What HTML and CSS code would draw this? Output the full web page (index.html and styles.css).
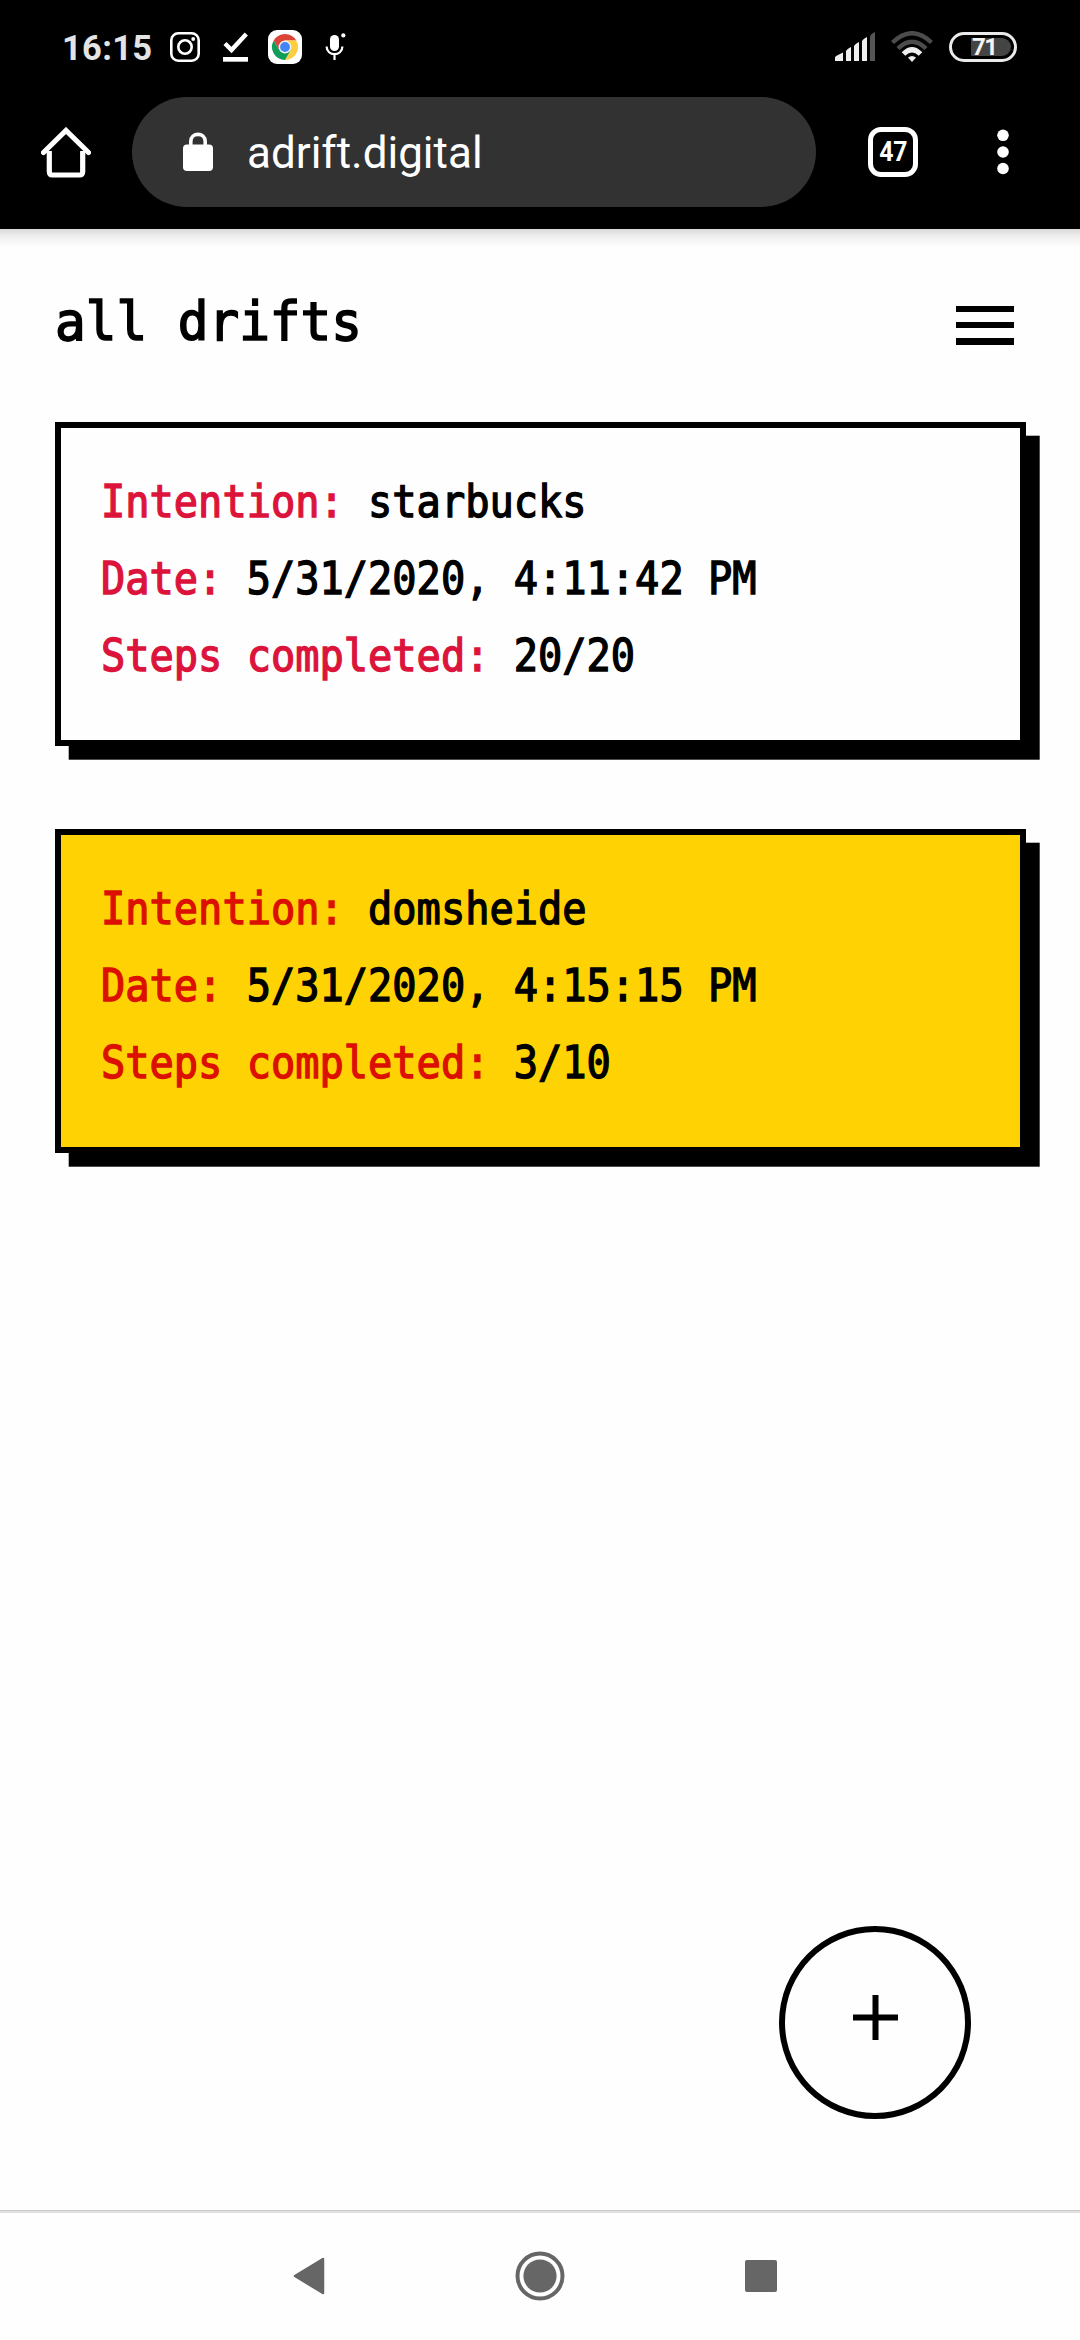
FILE: index.html
```html
<!DOCTYPE html>
<html lang="en">
<head>
<meta charset="utf-8">
<title>all drifts</title>
<link rel="stylesheet" href="styles.css">
</head>
<body>
<div class="screen">
  <div class="status">
    <span class="clock">16:15</span>
    <svg class="instagram" width="30" height="30" viewBox="0 0 30 30" fill="none" stroke="#fff"><rect x="1.3" y="1.3" width="27.4" height="27.4" rx="7" stroke-width="2.6"/><circle cx="15" cy="15" r="6.7" stroke-width="2.6"/><circle cx="23.2" cy="7" r="1.9" fill="#fff" stroke="none"/></svg>
    <svg class="check" width="26" height="30" viewBox="0 0 26 30"><path d="M2 11.5l6.5 6.5L23.3 2" fill="none" stroke="#fff" stroke-width="4.4"/><path d="M0 25h25v4.7H0z" fill="#fff"/></svg>
    <svg class="chrome" width="34" height="34" viewBox="0 0 34 34"><rect width="34" height="34" rx="9" fill="#fff"/><path d="M5.74 10.5A13 13 0 0 1 28.26 10.5H17L11.4 20.2z" fill="#db4437"/><path d="M28.26 10.5A13 13 0 0 1 17 30L22.6 20.2L17 10.5z" fill="#ffcd40"/><path d="M5.74 10.5A13 13 0 0 0 17 30L22.6 20.2H11.4z" fill="#0f9d58"/><circle cx="17" cy="17" r="6.4" fill="#f1f1f1"/><circle cx="17" cy="17" r="4.9" fill="#4285f4"/></svg>
    <svg class="mic" width="22" height="28" viewBox="0 0 22 28"><rect x="5" y="2" width="9" height="16" rx="4.5" fill="#fff"/><path d="M1.6 13.5c0 10.2 15.8 10.2 15.8 0M9.5 21v6" fill="none" stroke="#fff" stroke-width="2.2"/><circle cx="18.3" cy="2.4" r="2.1" fill="#fff"/></svg>
    <svg class="signal" width="40" height="30" viewBox="0 0 40 30" fill="#eee"><path d="M0 29v-3.500Q0 24 3 23L8 20.500V29zM11 29V19.500Q11 17.500 16 15V29zM19 29V14.500Q19 12.500 24 10V29zM27 29V9.500Q27 7.500 32 5V29z"/><path d="M35 29V4.500Q35 2.500 40 0V29z" fill="#555"/></svg>
    <svg class="wifi" width="42" height="32" viewBox="0 0 42 32" fill="none" stroke-width="4.400"><path d="M1.500 11.500Q21-7 40.500 11.500M7 17.500Q21 4 35 17.500" stroke="#4b4b4b"/><path d="M12.500 23Q21 14.500 29.500 23" stroke="#eee" stroke-width="5"/><path d="M17 26.500Q21 23.500 25 26.500L21 31z" fill="#eee"/></svg>
    <div class="battery"><span>71</span></div>
  </div>
  <div class="toolbar">
    <svg class="home" width="50" height="51" viewBox="0 0 50 51" fill="none" stroke="#fff" stroke-width="5.200" stroke-linejoin="round"><path d="M8.300 24V44.500Q8.300 48 11.300 48H38.700Q41.700 48 41.700 44.500V24"/><path d="M2.500 25.500L25 3.500L47.500 25.500" stroke-linecap="round" stroke-linejoin="miter"/></svg>
    <div class="omnibox">
      <svg width="30" height="39" viewBox="0 0 30 39"><rect y="12.500" width="30" height="26.500" rx="4" fill="#fff"/><path d="M7.800 14V9.500C7.800 0 22.200 0 22.200 9.500V14" fill="none" stroke="#fff" stroke-width="3.600"/></svg>
      <span>adrift.digital</span>
    </div>
    <div class="tabs"><span>47</span></div>
    <svg class="more" width="12" height="46" viewBox="0 0 12 46" fill="#fff"><circle cx="6" cy="6.300" r="5.800"/><circle cx="6" cy="23" r="5.800"/><circle cx="6" cy="39.500" r="5.800"/></svg>
  </div>
  <main class="page">
    <header class="header">
      <h1>all drifts</h1>
      <div class="menu"><i></i><i></i><i></i></div>
    </header>
    <section class="card">
      <p><b>Intention:</b> starbucks</p>
      <p><b>Date:</b> 5/31/2020, 4:11:42 PM</p>
      <p><b>Steps completed:</b> 20/20</p>
    </section>
    <section class="card active">
      <p><b>Intention:</b> domsheide</p>
      <p><b>Date:</b> 5/31/2020, 4:15:15 PM</p>
      <p><b>Steps completed:</b> 3/10</p>
    </section>
    <div class="add"><svg width="45" height="45" viewBox="0 0 45 45"><path d="M0 22.500H45M22.500 0V45" stroke="#000" stroke-width="6"/></svg></div>
  </main>
  <nav class="nav">
    <svg width="32" height="38" viewBox="0 0 32 38"><path d="M2 19L30 2V36z" fill="#666" stroke="#666" stroke-width="2.500" stroke-linejoin="round"/></svg>
    <svg class="nav-home" width="50" height="50" viewBox="0 0 50 50"><circle cx="25" cy="25" r="22.500" fill="none" stroke="#666" stroke-width="4"/><circle cx="25" cy="25" r="16.600" fill="#666"/></svg>
    <svg width="32" height="32" viewBox="0 0 32 32"><rect width="32" height="32" rx="2" fill="#666"/></svg>
  </nav>
</div>
</body>
</html>
```
FILE: styles.css
```css
* { box-sizing: border-box; }
body { margin: 0; background: #fefefe; }
svg { display: block; flex: none; }
.screen { width: 1080px; height: 2340px; display: flex; flex-direction: column; font-family: Roboto, sans-serif; color: #fff; }
.status { height: 94px; background: #000; display: flex; align-items: center; padding: 0 63px 0 62px; flex: none; }
.clock { font-size: 34.5px; font-weight: 700; color: #e4e4e4; width: 89px; line-height: 40px; letter-spacing: 0.3px; margin-top: 2px; }
.instagram { margin-left: 19px; }
.check { margin-left: 23px; }
.chrome { margin-left: 19px; }
.mic { margin-left: 23px; }
.signal { margin-left: auto; }
.wifi { margin-left: 16px; }
.battery { margin-left: 16px; width: 68px; height: 30px; border: 3px solid #eaeaea; border-radius: 15px; display: flex; padding: 3px 3px 3px 19px; }
.battery span { width: 40px; height: 18px; background: #444; border-radius: 1px 9px 9px 1px; color: #f4f4f4; font-size: 24px; font-weight: 700; line-height: 19px; letter-spacing: -1.5px; padding-left: 1px; }
.toolbar { height: 135px; background: #000; display: flex; align-items: center; padding: 3px 71px 22px 41px; flex: none; }
.omnibox { width: 684px; height: 110px; margin: 0 52px 0 41px; border-radius: 55px; background: #323232; display: flex; align-items: center; padding-left: 51px; font-size: 44px; line-height: 52px; gap: 34px; flex: none; }
.omnibox svg { margin-top: -2px; }
.omnibox span { margin-top: 2px; }
.tabs { width: 50px; height: 50px; border: 5.5px solid #fff; border-radius: 13px; display: flex; align-items: center; justify-content: center; font-size: 28.5px; font-weight: 700; line-height: 30px; }
.tabs span { transform: scaleX(.87); }
.more { margin-left: auto; }
.page { flex: 1; background: linear-gradient(#dadada, #f0f0f0 8px, #fefefe 18px); padding: 61px 54px 91px 55px; display: flex; flex-direction: column; color: #000; font-family: "DejaVu Sans Mono", monospace; }
.header { display: flex; justify-content: space-between; height: 132px; }
h1 { margin: 0; font-size: 53.5px; font-weight: 400; line-height: 64px; transform: scaleX(.953); transform-origin: left; -webkit-text-stroke: 1.7px; }
.menu { width: 58px; margin: 16px 12px 0 0; display: flex; flex-direction: column; gap: 10px; }
.menu i { height: 6.2px; background: #000; }
.card { width: 971px; height: 324px; flex: none; border: 6px solid #000; background: #fefefe; box-shadow: 13.7px 13.7px #000; padding: 35px 40px 33px; margin-bottom: 83px; }
.card p { margin: 0; font-size: 44px; line-height: 77px; white-space: nowrap; transform: scaleX(.9165); transform-origin: left; -webkit-text-stroke: 1.4px; }
.card b { font-weight: 400; color: #dc143c; }
.active { background: #ffd203; }
.active b { color: #dc1000; }
.add { width: 192px; height: 193px; border: 6px solid #000; border-radius: 50%; margin: auto 55px 0 auto; display: flex; align-items: center; justify-content: center; padding-bottom: 10px; }
.nav { height: 130px; flex: none; background: #fefefe; border-top: 1px solid #c8c8c8; box-shadow: inset 0 2px #e0e0e0; display: flex; align-items: center; justify-content: space-between; padding: 1px 303px 0 293px; }
.nav-home { margin-left: 9px; }
```
